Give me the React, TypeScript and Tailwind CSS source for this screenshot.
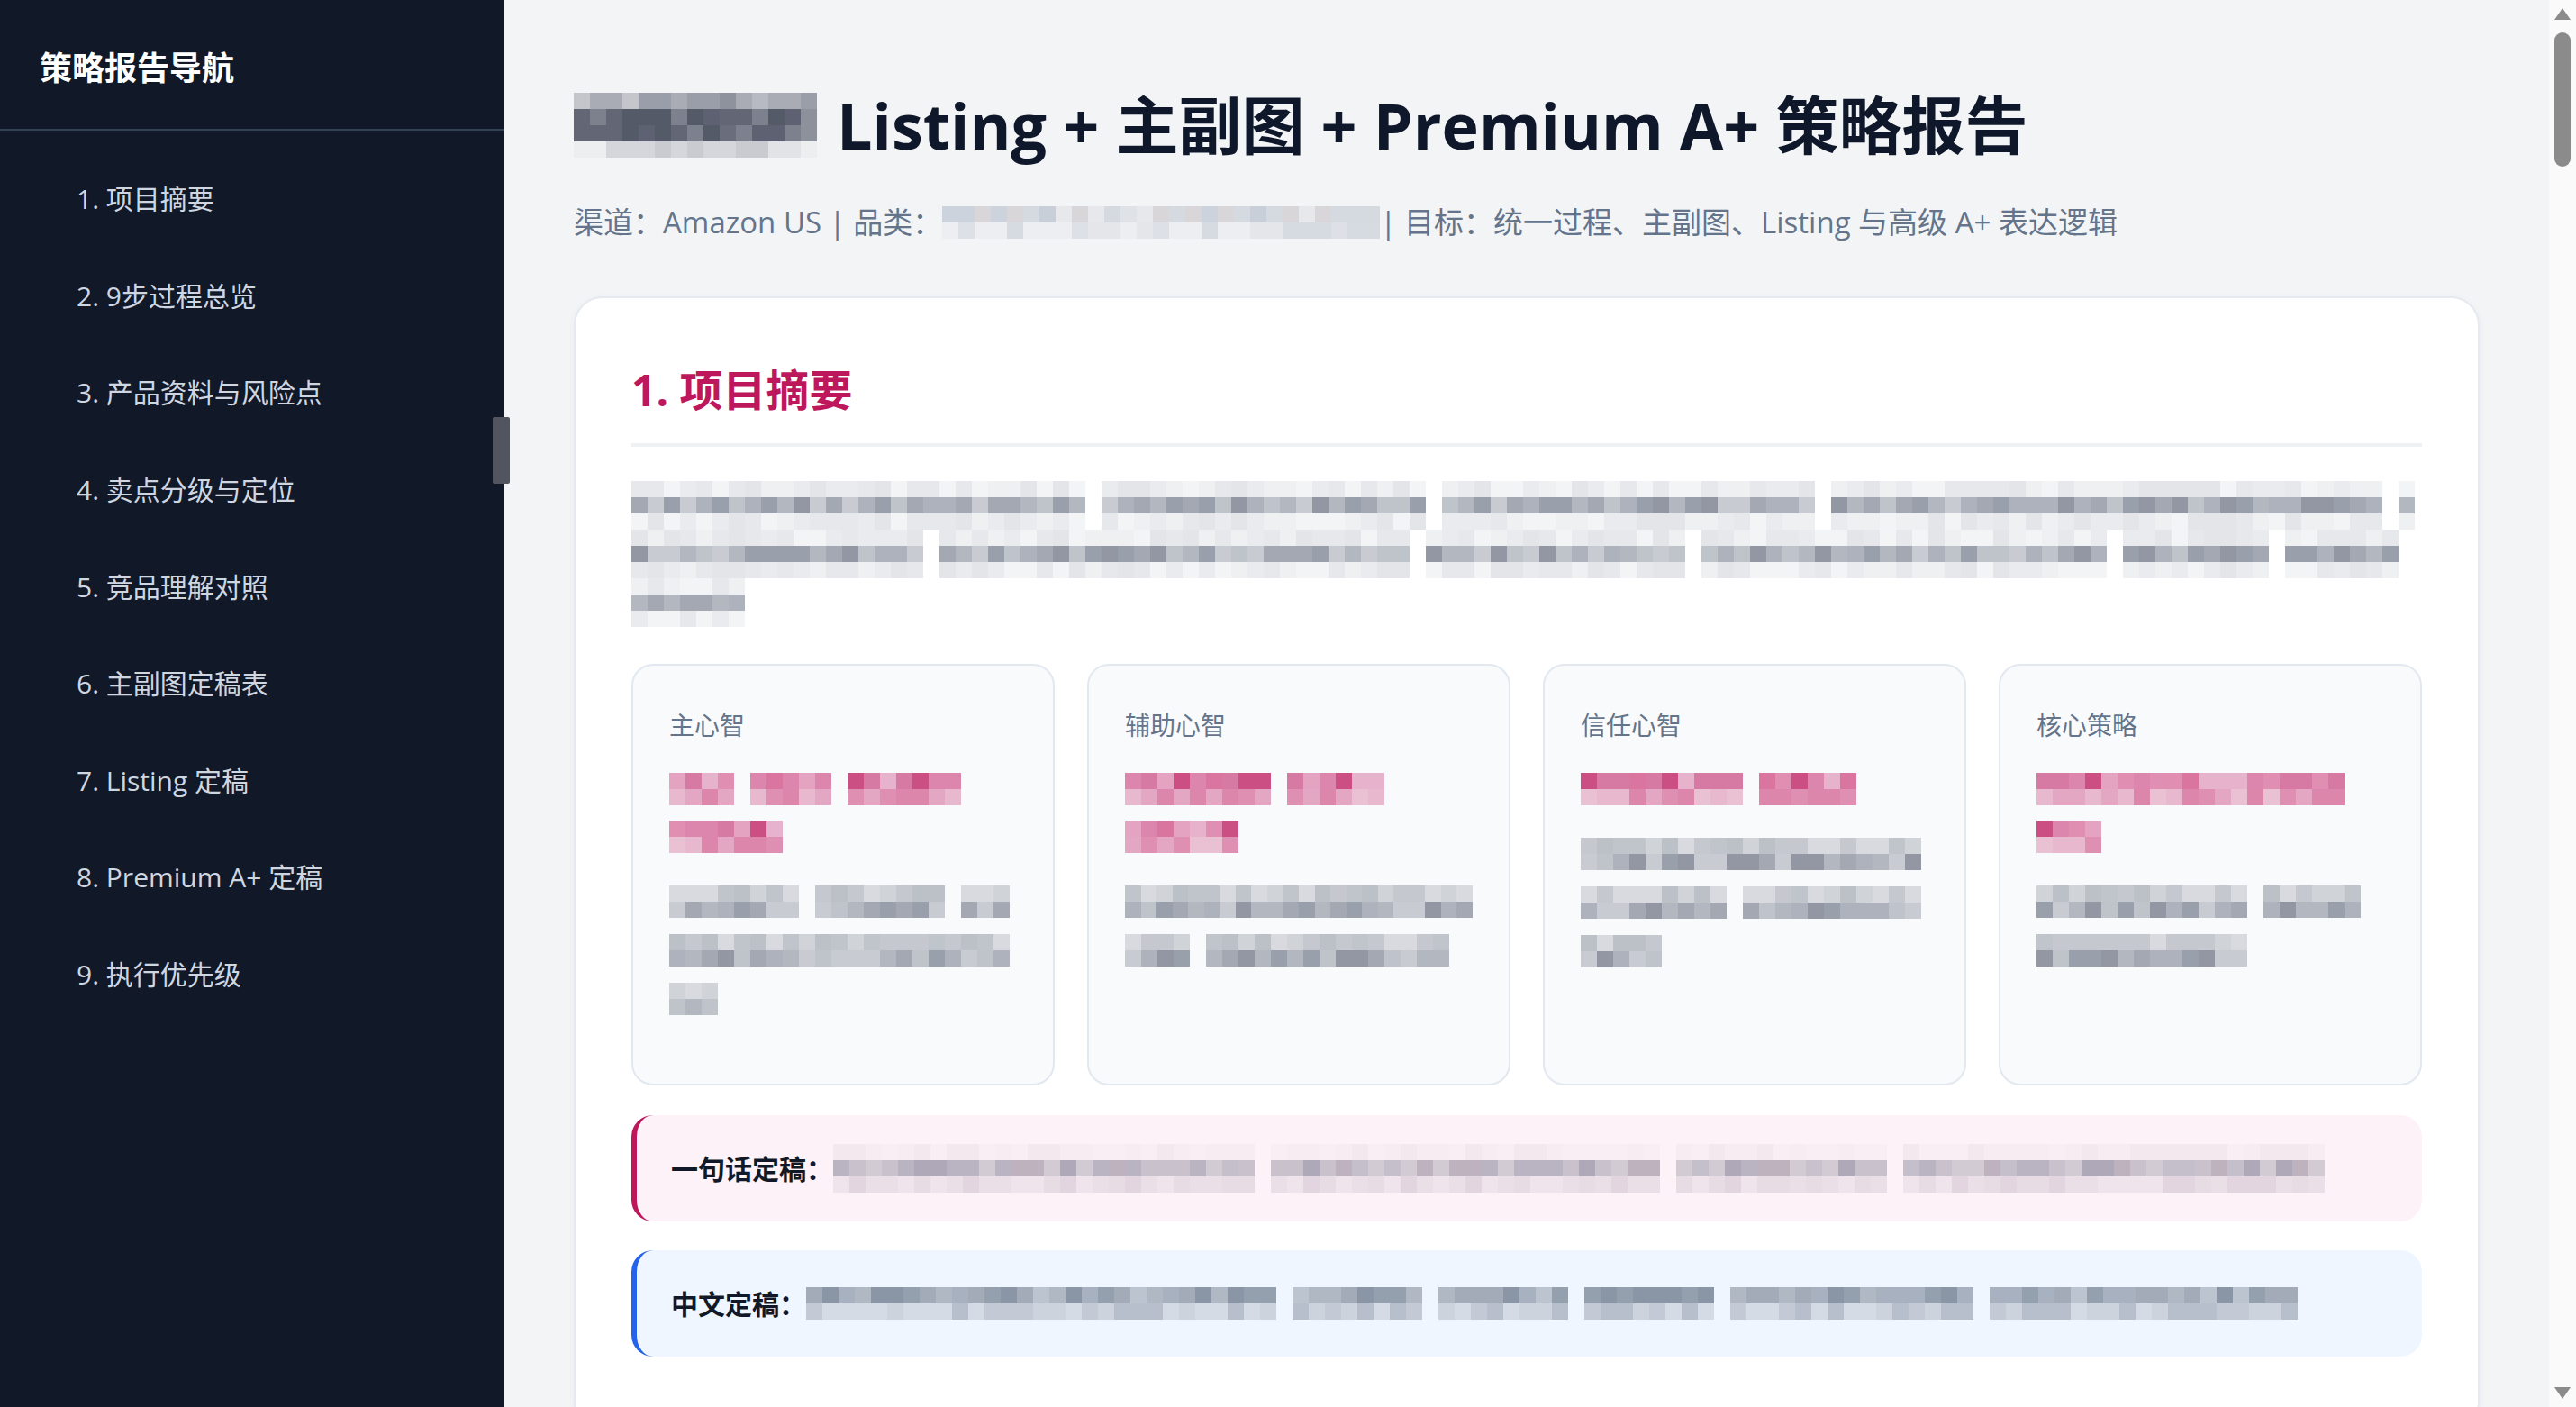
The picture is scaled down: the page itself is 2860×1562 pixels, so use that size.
import React from 'react'

type Tone = 'ink' | 'gray' | 'pink' | 'cat' | 'rose' | 'blue'
type Band = 's' | 'm' | 'f'

// pixelated placeholder palettes, one per surface
const palettes: Record<Tone, Record<Band, string[]>> = {
  ink: {
    s: ['#5d6171', '#6a6e7c', '#555a69', '#7d818d', '#636775', '#8d919c'],
    m: ['#9a9ea8', '#a9acb5', '#b7bac2', '#8e929c', '#c4c6cc'],
    f: ['#d4d6db', '#dcdee2', '#c9cbd1', '#e2e3e6', '#eceef0'],
  },
  gray: {
    s: ['#a3a8b2', '#b3b7c0', '#9aa0ab', '#bfc3ca', '#c8cbd1', '#adb2bc', '#9297a3'],
    m: ['#c5c9cf', '#d0d3d8', '#bcc0c7', '#d8dadf', '#c0c4cb'],
    f: ['#e9ebee', '#eef0f2', '#e3e5e9', '#f3f4f6', '#e6e8eb'],
  },
  pink: {
    s: ['#d9759f', '#e08fb3', '#e4a3c0', '#dd86ad', '#cc4f83', '#e7b2cb', '#d67aa3'],
    m: ['#e3a7c4', '#e8b8cf', '#de8fb2', '#eac0d3', '#dc86ab'],
    f: ['#f5e1ea', '#f8eaf0', '#f3e4ec'],
  },
  cat: {
    s: ['#dfe2e7', '#d5d9e0', '#cdd3dc', '#e6e8ec', '#c9cfd8', '#d9d6da'],
    m: ['#e4e6ea', '#dde1e7', '#eceef1', '#d6dbe2'],
    f: ['#eef0f3', '#f0f1f4'],
  },
  rose: {
    s: ['#b9b3c2', '#c5bfcb', '#aea8b8', '#d2cbd3', '#c9c2cc', '#bdb2bd'],
    m: ['#e7dbe4', '#eadfe7', '#e2d5df', '#efe4eb'],
    f: ['#f6ecf2', '#f3e8ee', '#f8eef3'],
  },
  blue: {
    s: ['#a3abb9', '#94a0ae', '#b0b8c4', '#bcc4cf', '#8a96a6', '#a8b1bf'],
    m: ['#c3cad5', '#ccd3dd', '#b6bfcb', '#d5dbe4'],
    f: ['#e6edf7', '#e9f0f9'],
  },
}

function makeRand(seed: number) {
  let s = seed * 7919 + 13
  return () => {
    s = (s * 9301 + 49297) % 233280
    return s / 233280
  }
}

function Mosaic({
  cols,
  rows,
  tone,
  seed,
  gaps = [],
}: {
  cols: number
  rows: Band[]
  tone: Tone
  seed: number
  gaps?: number[]
}) {
  const rand = makeRand(seed)
  const pal = palettes[tone]
  return (
    <span className="inline-flex shrink-0 flex-col">
      {rows.map((band, ri) => (
        <span key={ri} className="flex">
          {Array.from({ length: cols }, (_, ci) => {
            const list = pal[band]
            const pick = list[Math.floor(rand() * list.length)]
            return (
              <span
                key={ci}
                className="block h-[18px] w-[18px]"
                style={{ backgroundColor: gaps.includes(ci) ? 'transparent' : pick }}
              />
            )
          })}
        </span>
      ))}
    </span>
  )
}

const navItems = [
  '1. 项目摘要',
  '2. 9步过程总览',
  '3. 产品资料与风险点',
  '4. 卖点分级与定位',
  '5. 竞品理解对照',
  '6. 主副图定稿表',
  '7. Listing 定稿',
  '8. Premium A+ 定稿',
  '9. 执行优先级',
]

type Line = { cols: number; gaps?: number[] }

const pillars: { label: string; pink: Line[]; gray: Line[] }[] = [
  {
    label: '主心智',
    pink: [{ cols: 18, gaps: [4, 10] }, { cols: 7 }],
    gray: [{ cols: 21, gaps: [8, 17] }, { cols: 21 }, { cols: 3 }],
  },
  {
    label: '辅助心智',
    pink: [{ cols: 16, gaps: [9] }, { cols: 7 }],
    gray: [{ cols: 22 }, { cols: 20, gaps: [4] }],
  },
  {
    label: '信任心智',
    pink: [{ cols: 17, gaps: [10] }],
    gray: [{ cols: 21 }, { cols: 21, gaps: [9] }, { cols: 5 }],
  },
  {
    label: '核心策略',
    pink: [{ cols: 19 }, { cols: 4 }],
    gray: [{ cols: 20, gaps: [13] }, { cols: 13 }],
  },
]

const sans = 'font-["Open_Sans","Noto_Sans_CJK_SC",sans-serif]'

function Sidebar() {
  return (
    <aside className="flex h-full w-[560px] shrink-0 flex-col bg-[#111827]">
      <div className="flex h-[145px] items-center border-b-2 border-[#334155] pl-[44px] pt-[8px]">
        <h2 className="text-[36px] font-bold text-white">策略报告导航</h2>
      </div>
      <nav className="flex flex-col pt-[22px]">
        {navItems.map((item) => (
          <a key={item} className="flex h-[107.6px] items-center pl-[85px] text-[30px] text-[#cfd6e0]">
            {item}
          </a>
        ))}
      </nav>
    </aside>
  )
}

function PillarCard({ label, pink, gray, seed }: { label: string; pink: Line[]; gray: Line[]; seed: number }) {
  return (
    <div className="h-[468px] rounded-[24px] border-2 border-[#e2e8f0] bg-[#f9fafb] px-[40px] pt-[46px]">
      <div className="text-[28px] leading-[40px] text-[#64748b]">{label}</div>
      <div className="mt-[33px] flex flex-col gap-[17px]">
        {pink.map((l, i) => (
          <Mosaic key={i} cols={l.cols} gaps={l.gaps} rows={['s', 'm']} tone="pink" seed={seed + i} />
        ))}
      </div>
      <div className="mt-[36px] flex flex-col gap-[18px]">
        {gray.map((l, i) => (
          <Mosaic key={i} cols={l.cols} gaps={l.gaps} rows={['m', 's']} tone="gray" seed={seed + 10 + i} />
        ))}
      </div>
    </div>
  )
}

function Callout({
  label,
  tone,
  cols,
  gaps,
  rows,
  accent,
}: {
  label: string
  tone: Tone
  cols: number
  gaps: number[]
  rows: Band[]
  accent: 'pink' | 'blue'
}) {
  const box =
    accent === 'pink'
      ? 'border-[#be185d] bg-[#fdf2f8]'
      : 'border-[#2563eb] bg-[#eff6ff]'
  return (
    <div className={`flex h-[118px] items-center rounded-[24px] border-l-[6px] pl-[38px] ${box}`}>
      <strong className="text-[30px] font-bold text-[#111827]">{label}</strong>
      <Mosaic cols={cols} gaps={gaps} rows={rows} tone={tone} seed={cols + gaps.length} />
    </div>
  )
}

function Scrollbar() {
  return (
    <div className="relative h-full w-[30px] shrink-0 bg-[#fafafa]">
      <div className="absolute left-[6px] top-[9px] h-0 w-0 border-x-[9px] border-b-[13px] border-x-transparent border-b-[#8b8b8b]" />
      <div className="absolute left-[6px] top-[36px] h-[149px] w-[18px] rounded-full bg-[#8b8b8b]" />
      <div className="absolute bottom-[9px] left-[6px] h-0 w-0 border-x-[9px] border-t-[13px] border-x-transparent border-t-[#8b8b8b]" />
    </div>
  )
}

export default function App() {
  return (
    <div className={`relative flex h-[1562px] w-[2860px] overflow-hidden bg-[#f3f4f6] ${sans}`}>
      <Sidebar />
      <div className="absolute left-[547px] top-[463px] h-[74px] w-[19px] rounded-[2px] bg-[#52555f]" />

      <main className="flex min-w-0 flex-1 flex-col px-[77px] pt-[96px]">
        <h1 className="flex items-center gap-[22px] text-[70px] font-bold leading-[86px] text-[#0f172a]">
          <Mosaic cols={15} rows={['m', 's', 's', 'f']} tone="ink" seed={3} />
          <span>Listing + 主副图 + Premium A+ 策略报告</span>
        </h1>

        <p className="mt-[40px] flex items-center text-[33px] leading-[50px] text-[#64748b]">
          <span>渠道：Amazon US | 品类：</span>
          <Mosaic cols={27} rows={['s', 'm']} tone="cat" seed={5} />
          <span>| 目标：统一过程、主副图、Listing 与高级 A+ 表达逻辑</span>
        </p>

        <section className="mt-[57px] rounded-[32px] border-2 border-[#e5e9f0] bg-white px-[62px] pt-[70px] pb-[80px] shadow-[0_2px_8px_rgba(15,23,42,0.04)]">
          <h2 className="border-b-4 border-[#f0f1f4] pb-[27px] text-[48px] font-bold leading-[64px] text-[#be185d]">
            1. 项目摘要
          </h2>

          <div className="mt-[38px] flex flex-col">
            <Mosaic cols={110} gaps={[28, 49, 73, 108]} rows={['f', 's', 'f']} tone="gray" seed={11} />
            <Mosaic cols={109} gaps={[18, 48, 65, 91, 101]} rows={['f', 's', 'f']} tone="gray" seed={12} />
            <Mosaic cols={7} rows={['f', 's', 'f']} tone="gray" seed={13} />
          </div>

          <div className="mt-[41px] grid grid-cols-4 gap-[36px]">
            {pillars.map((p, i) => (
              <PillarCard key={p.label} label={p.label} pink={p.pink} gray={p.gray} seed={20 + i * 7} />
            ))}
          </div>

          <div className="mt-[33px] flex flex-col gap-[32px]">
            <Callout
              label="一句话定稿："
              tone="rose"
              cols={92}
              gaps={[26, 51, 65]}
              rows={['f', 's', 'm']}
              accent="pink"
            />
            <Callout
              label="中文定稿："
              tone="blue"
              cols={92}
              gaps={[29, 38, 47, 56, 72]}
              rows={['s', 'm']}
              accent="blue"
            />
          </div>
        </section>
      </main>

      <Scrollbar />
    </div>
  )
}
